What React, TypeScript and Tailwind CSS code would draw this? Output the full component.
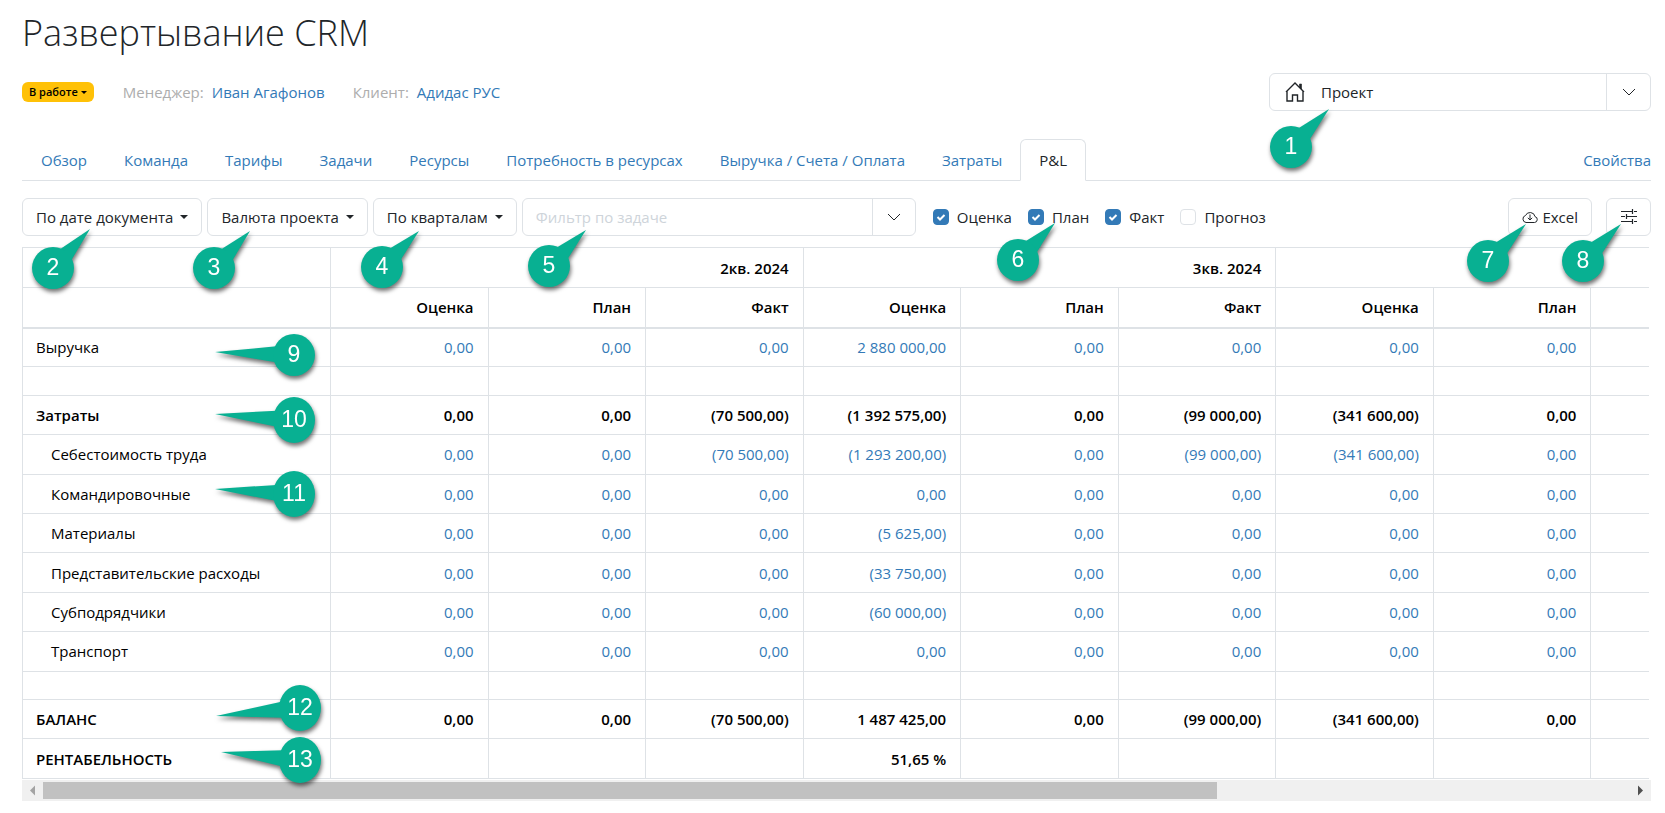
import type { ReactNode } from "react";

type Row = {
  label: string;
  kind: "link" | "child" | "total" | "gap";
  values?: string[];
};

const tabs = [
  "Обзор",
  "Команда",
  "Тарифы",
  "Задачи",
  "Ресурсы",
  "Потребность в ресурсах",
  "Выручка / Счета / Оплата",
  "Затраты",
  "P&L",
];

const measures = [
  { label: "Оценка", checked: true },
  { label: "План", checked: true },
  { label: "Факт", checked: true },
  { label: "Прогноз", checked: false },
];

const periods = ["2кв. 2024", "3кв. 2024", ""];
const columns = ["Оценка", "План", "Факт", "Оценка", "План", "Факт", "Оценка", "План", ""];
const zeros = ["0,00", "0,00", "0,00", "0,00", "0,00", "0,00", "0,00", "0,00"];

const withEstimate = (value: string) => zeros.map((v, i) => (i === 3 ? value : v));

const rows: Row[] = [
  { label: "Выручка", kind: "link", values: withEstimate("2 880 000,00") },
  { label: "", kind: "gap" },
  {
    label: "Затраты",
    kind: "total",
    values: ["0,00", "0,00", "(70 500,00)", "(1 392 575,00)", "0,00", "(99 000,00)", "(341 600,00)", "0,00"],
  },
  {
    label: "Себестоимость труда",
    kind: "child",
    values: ["0,00", "0,00", "(70 500,00)", "(1 293 200,00)", "0,00", "(99 000,00)", "(341 600,00)", "0,00"],
  },
  { label: "Командировочные", kind: "child", values: zeros },
  { label: "Материалы", kind: "child", values: withEstimate("(5 625,00)") },
  { label: "Представительские расходы", kind: "child", values: withEstimate("(33 750,00)") },
  { label: "Субподрядчики", kind: "child", values: withEstimate("(60 000,00)") },
  { label: "Транспорт", kind: "child", values: zeros },
  { label: "", kind: "gap" },
  {
    label: "БАЛАНС",
    kind: "total",
    values: ["0,00", "0,00", "(70 500,00)", "1 487 425,00", "0,00", "(99 000,00)", "(341 600,00)", "0,00"],
  },
  { label: "РЕНТАБЕЛЬНОСТЬ", kind: "total", values: ["", "", "", "51,65 %", "", "", "", ""] },
];

function Caret({ small }: { small?: boolean }) {
  return (
    <svg viewBox="0 0 10 5" className={small ? "w-[6px]" : "w-[8px]"} fill="currentColor">
      <path d="M0 0h10L5 5z" />
    </svg>
  );
}

function Chevron() {
  return (
    <svg viewBox="0 0 16 16" className="size-4" fill="none" stroke="currentColor">
      <path d="M2 5l6 6 6-6" />
    </svg>
  );
}

function HomeIcon() {
  return (
    <svg viewBox="0 0 20 20" className="size-5" fill="none" stroke="currentColor" strokeWidth="1.4">
      <path d="M1 10l9-9 9 9M2 9.500V19h5.500v-6h5v6H18V9.500" />
      <path d="M14.500 2h2v5.500l-2-2z" fill="currentColor" strokeWidth="0.6" />
    </svg>
  );
}

function CloudIcon() {
  return (
    <svg viewBox="0 0 16 16" className="size-4" fill="none" stroke="currentColor">
      <path d="M4 13.500h8.500a3 3 0 0 0 .5-5.900A5 5 0 0 0 3.500 6.500 3.600 3.600 0 0 0 4 13.500z" />
      <path d="M8 5.500v5.500M5.800 8.800L8 11l2.200-2.200" />
    </svg>
  );
}

function SlidersIcon() {
  return (
    <svg viewBox="0 0 16 16" className="size-4" fill="none" stroke="currentColor">
      <path d="M0 2.500h11M13 2.500h3M0 7.500h4M5 7.500h11M0 12.500h11M13 12.500h3" />
      <path d="M11.500 0v5M5.500 5v5M11.500 10v5" strokeWidth="1.2" />
    </svg>
  );
}

function MenuButton({ children }: { children: ReactNode }) {
  return (
    <button className="flex h-[38px] items-center gap-[7px] rounded-md border border-[#dee2e6] px-[13px] whitespace-nowrap">
      {children}
      <Caret />
    </button>
  );
}

// Numbered marker: a disc with a pointer that ends dx/dy away from its centre
function Callout({ n, dx, dy, className }: { n: number; dx: number; dy: number; className: string }) {
  const len = Math.hypot(dx, dy);
  const ux = dx / len;
  const uy = dy / len;
  const bx = ux * 18;
  const by = uy * 18;
  const points = [
    [dx, dy],
    [bx - uy * 8, by + ux * 8],
    [bx + uy * 8, by - ux * 8],
  ];
  return (
    <svg
      className={`pointer-events-none absolute size-px overflow-visible drop-shadow-[1px_3px_2px_rgba(0,0,0,0.55)] ${className}`}
      fill="#08b092"
    >
      <polygon points={points.map((p) => p.join(",")).join(" ")} />
      <ellipse rx="21" ry={n > 9 ? 23 : 21} />
      <text y="7" textAnchor="middle" fontSize="23" fill="#fff" className="font-['Liberation_Sans',sans-serif]">
        {n}
      </text>
    </svg>
  );
}

function PnlTable() {
  return (
    <div className="mr-[2px] overflow-hidden">
      <table className="h-[532px] w-[1727px] table-fixed border-collapse text-right text-black">
        <thead className="border-b-2 border-[#dee2e6]">
          <tr className="h-10">
            <th className="w-[308px] border border-[#dee2e6]" />
            {periods.map((period, i) => (
              <th key={i} colSpan={3} className="border border-[#dee2e6] px-[14px] font-semibold">
                {period}
              </th>
            ))}
          </tr>
          <tr className="h-10">
            <th className="border border-b-2 border-[#dee2e6]" />
            {columns.map((column, i) => (
              <th key={i} className="border border-b-2 border-[#dee2e6] px-[14px] font-semibold">
                {column}
              </th>
            ))}
          </tr>
        </thead>
        <tbody>
          {rows.map((row, r) => (
            <tr
              key={r}
              className={`${row.kind === "gap" ? "h-[28px]" : "h-[39px]"} ${row.kind === "total" ? "font-semibold" : ""}`}
            >
              <td
                className={`border border-[#dee2e6] text-left ${row.kind === "child" ? "pl-[28px]" : "pl-[13px]"}`}
              >
                {row.label}
              </td>
              {columns.map((_, c) => {
                const value = row.values?.[c];
                return (
                  <td key={c} className="border border-[#dee2e6] px-[14px]">
                    {value && row.kind !== "total" ? (
                      <a href="#" className="text-[#337ab7]">
                        {value}
                      </a>
                    ) : (
                      value
                    )}
                  </td>
                );
              })}
            </tr>
          ))}
        </tbody>
      </table>
    </div>
  );
}

export default function App() {
  return (
    <div className="relative bg-white pt-1 pr-[14px] pb-3 pl-[22px] font-['Open_Sans','Noto_Sans',sans-serif] text-[15px] leading-6 text-[#212529]">
      <h1 className="text-[36px] leading-[58px] font-light">Развертывание CRM</h1>

      <div className="mt-[11px] flex h-[38px] items-center">
        <button className="flex h-5 items-center gap-[3px] rounded-md bg-[#ffc107] px-[7px] text-[11px] font-semibold text-black">
          В работе
          <Caret small />
        </button>
        <span className="ml-[29px] text-[#adadad]">Менеджер:</span>
        <a href="#" className="ml-2 text-[#337ab7]">Иван Агафонов</a>
        <span className="ml-[28px] text-[#adadad]">Клиент:</span>
        <a href="#" className="ml-2 text-[#337ab7]">Адидас РУС</a>
        <button className="ml-auto flex h-[38px] w-[382px] items-center rounded-md border border-[#dee2e6] text-left">
          <span className="flex flex-1 items-center gap-4 pl-[15px]">
            <HomeIcon />
            Проект
          </span>
          <span className="flex h-full w-[44px] items-center justify-center border-l border-[#dee2e6]">
            <Chevron />
          </span>
        </button>
      </div>

      <nav className="mt-7 flex h-[42px] items-center border-b border-[#dee2e6] text-[#337ab7]">
        {tabs.map((tab) => (
          <a
            key={tab}
            href="#"
            className={`-mr-px -mb-px flex h-[42px] items-center rounded-t-md border px-[18px] ${
              tab === "P&L" ? "border-[#dee2e6] border-b-white bg-white text-[#212529]" : "border-transparent"
            }`}
          >
            {tab}
          </a>
        ))}
        <a href="#" className="ml-auto">Свойства</a>
      </nav>

      <div className="mt-[17px] flex items-center gap-[5px]">
        <MenuButton>По дате документа</MenuButton>
        <MenuButton>Валюта проекта</MenuButton>
        <MenuButton>По кварталам</MenuButton>
        <div className="flex h-[38px] w-[394px] rounded-md border border-[#dee2e6]">
          <input
            aria-label="Фильтр по задаче"
            placeholder="Фильтр по задаче"
            className="min-w-0 flex-1 px-[13px] outline-none placeholder:text-[#ced4da]"
          />
          <button className="flex w-[43px] items-center justify-center border-l border-[#dee2e6]">
            <Chevron />
          </button>
        </div>
        <div className="ml-3 flex items-center gap-4">
          {measures.map((m) => (
            <label key={m.label} className="flex items-center gap-2">
              <span className="relative flex size-4">
                <input
                  type="checkbox"
                  defaultChecked={m.checked}
                  className="peer size-4 appearance-none rounded border border-[#dee2e6] checked:border-[#337ab7] checked:bg-[#337ab7]"
                />
                <svg
                  viewBox="0 0 16 16"
                  className="pointer-events-none absolute inset-0 hidden peer-checked:block"
                  fill="none"
                  stroke="#fff"
                  strokeWidth="2"
                >
                  <path d="M4.500 8l2.500 2.500 4.500-4.500" />
                </svg>
              </span>
              {m.label}
            </label>
          ))}
        </div>
        <button className="ml-auto flex h-[38px] items-center gap-1 rounded-md border border-[#dee2e6] px-[13px]">
          <CloudIcon />
          Excel
        </button>
        <button
          aria-label="Настройки"
          className="ml-[9px] flex h-[38px] w-[45px] items-center justify-center rounded-md border border-[#dee2e6]"
        >
          <SlidersIcon />
        </button>
      </div>

      <div className="mt-[11px]">
        <PnlTable />
        <div className="mt-px flex h-[21px] items-center bg-[#f0f0f0]">
          <svg viewBox="0 0 21 21" className="size-[21px]" fill="#a3a3a3">
            <path d="M13 5.500v10l-5-5z" />
          </svg>
          <div className="flex h-[17px] flex-1">
            <div className="w-[74%] bg-[#c1c1c1]" />
          </div>
          <svg viewBox="0 0 21 21" className="size-[21px]" fill="#505050">
            <path d="M8 5.500v10l5-5z" />
          </svg>
        </div>
      </div>

      <Callout n={1} dx={38} dy={-38} className="top-[147px] right-[373px]" />
      <Callout n={2} dx={37} dy={-39} className="top-[268px] left-[53px]" />
      <Callout n={3} dx={36} dy={-37} className="top-[268px] left-[214px]" />
      <Callout n={4} dx={37} dy={-36} className="top-[267px] left-[382px]" />
      <Callout n={5} dx={37} dy={-36} className="top-[266px] left-[549px]" />
      <Callout n={6} dx={37} dy={-37} className="top-[260px] left-[1018px]" />
      <Callout n={7} dx={38} dy={-37} className="top-[261px] right-[176px]" />
      <Callout n={8} dx={38} dy={-37} className="top-[261px] right-[81px]" />
      <Callout n={9} dx={-79} dy={-3} className="top-[355px] left-[294px]" />
      <Callout n={10} dx={-79} dy={-6} className="top-[420px] left-[294px]" />
      <Callout n={11} dx={-79} dy={-5} className="top-[494px] left-[294px]" />
      <Callout n={12} dx={-84} dy={8} className="top-[708px] left-[300px]" />
      <Callout n={13} dx={-79} dy={-8} className="top-[760px] left-[300px]" />
    </div>
  );
}
